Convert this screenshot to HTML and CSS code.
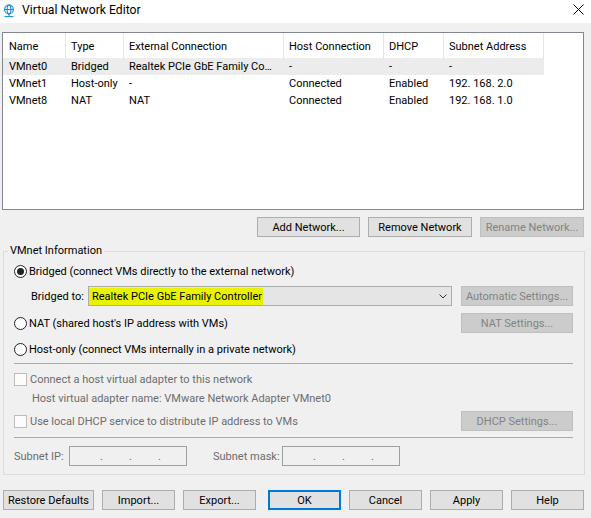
FILE: index.html
```html
<!DOCTYPE html>
<html>
<head>
<meta charset="utf-8">
<title>Virtual Network Editor</title>
<link rel="stylesheet" href="styles.css">
</head>
<body>
<div class="titlebar">
  <svg class="app-icon" width="12" height="14" viewBox="0 0 12 14">
    <g fill="none" stroke="#1b8ed6" stroke-width="1.1">
      <circle cx="6" cy="5.5" r="4.4"/>
      <ellipse cx="6" cy="5.5" rx="1.9" ry="4.4"/>
      <line x1="1.6" y1="5.5" x2="10.4" y2="5.5"/>
      <line x1="6" y1="10" x2="6" y2="12.6"/>
      <line x1="1.5" y1="12.6" x2="10.5" y2="12.6"/>
    </g>
  </svg>
  <span class="title">Virtual Network Editor</span>
  <svg class="close" width="11" height="11" viewBox="0 0 11 11">
    <path d="M0.5 0.5 L10.5 10.5 M10.5 0.5 L0.5 10.5" stroke="#000" stroke-width="1" fill="none"/>
  </svg>
</div>

<div class="content">
  <div class="list">
    <div class="lv-row lv-head">
      <div class="cell first">Name</div>
      <div class="cell">Type</div>
      <div class="cell">External Connection</div>
      <div class="cell">Host Connection</div>
      <div class="cell">DHCP</div>
      <div class="cell">Subnet Address</div>
    </div>
    <div class="lv-row sel">
      <div class="cell first">VMnet0</div>
      <div class="cell">Bridged</div>
      <div class="cell">Realtek PCIe GbE Family Co…</div>
      <div class="cell">-</div>
      <div class="cell">-</div>
      <div class="cell">-</div>
    </div>
    <div class="lv-row">
      <div class="cell first">VMnet1</div>
      <div class="cell">Host-only</div>
      <div class="cell">-</div>
      <div class="cell">Connected</div>
      <div class="cell">Enabled</div>
      <div class="cell">192. 168. 2.0</div>
    </div>
    <div class="lv-row">
      <div class="cell first">VMnet8</div>
      <div class="cell">NAT</div>
      <div class="cell">NAT</div>
      <div class="cell">Connected</div>
      <div class="cell">Enabled</div>
      <div class="cell">192. 168. 1.0</div>
    </div>
  </div>

  <div class="net-actions">
    <button class="btn w-add">Add Network...</button>
    <button class="btn w-remove">Remove Network</button>
    <button class="btn w-rename disabled">Rename Network...</button>
  </div>

  <fieldset class="group">
    <legend>VMnet Information</legend>

    <div class="opt-row r-bridged">
      <span class="radio on"></span>
      <span class="txt">Bridged (connect VMs directly to the external network)</span>
    </div>

    <div class="opt-row r-bridged-to">
      <span class="bt-label">Bridged to:</span>
      <div class="combo">
        <span class="hl">Realtek PCIe GbE Family Controller</span>
        <svg class="chev" width="8" height="5" viewBox="0 0 8 5">
          <polyline points="0.5,0.5 4,4 7.5,0.5" fill="none" stroke="#333" stroke-width="1"/>
        </svg>
      </div>
      <button class="btn w-side disabled push">Automatic Settings...</button>
    </div>

    <div class="opt-row r-nat">
      <span class="radio"></span>
      <span class="txt">NAT (shared host's IP address with VMs)</span>
      <button class="btn w-side disabled push">NAT Settings...</button>
    </div>

    <div class="opt-row r-host">
      <span class="radio"></span>
      <span class="txt">Host-only (connect VMs internally in a private network)</span>
    </div>

    <div class="sep s1"></div>

    <div class="opt-row r-check1 dim">
      <span class="check"></span>
      <span class="txt">Connect a host virtual adapter to this network</span>
    </div>

    <div class="opt-row r-adapter dim">
      <span class="txt">Host virtual adapter name: VMware Network Adapter VMnet0</span>
    </div>

    <div class="opt-row r-dhcp dim">
      <span class="check"></span>
      <span class="txt">Use local DHCP service to distribute IP address to VMs</span>
      <button class="btn w-side disabled push">DHCP Settings...</button>
    </div>

    <div class="sep s2"></div>

    <div class="opt-row r-subnet dim">
      <span class="sn-label">Subnet IP:</span>
      <div class="ipbox"><span>.</span><span>.</span><span>.</span></div>
      <span class="sn-label mask">Subnet mask:</span>
      <div class="ipbox"><span>.</span><span>.</span><span>.</span></div>
    </div>
  </fieldset>
</div>

<div class="footer">
  <button class="btn w-restore">Restore Defaults</button>
  <button class="btn w-std">Import...</button>
  <button class="btn w-std">Export...</button>
  <button class="btn w-std default ok">OK</button>
  <button class="btn w-std">Cancel</button>
  <button class="btn w-std">Apply</button>
  <button class="btn w-std">Help</button>
</div>
</body>
</html>
```

FILE: styles.css
```css
* { box-sizing: border-box; }
html, body { margin: 0; padding: 0; }
body {
  width: 591px;
  height: 518px;
  overflow: hidden;
  background: #f0f0f0;
  font-family: Roboto, "Noto Sans", sans-serif;
  font-size: 11px;
  color: #000;
}

/* title bar */
.titlebar {
  height: 23px;
  background: #fff;
  display: flex;
  align-items: center;
  padding-left: 3px;
}
.app-icon { display: block; margin-top: -2px; }
.title { margin-left: 7px; font-size: 12.2px; line-height: 16px; margin-top: -3px; }
.close { margin-left: auto; margin-right: 7px; align-self: flex-start; margin-top: 4px; }

.content { padding: 9px 0 0 2px; }

/* list view */
.list {
  width: 582px;
  height: 178px;
  background: #fff;
  border: 1px solid #828790;
}
.lv-row {
  display: grid;
  grid-template-columns: 63px 58px 160px 100px 60px 100px;
  width: 541px;
  height: 17px;
  line-height: 16px;
  padding-top: 1px;
}
.lv-head { height: 25px; line-height: 23px; padding-top: 2px; }
.lv-head .cell { border-right: 1px solid #e5e5e5; margin-top: -2px; padding-top: 2px; }
.lv-row.sel { background: #ececec; }
.cell { padding-left: 5px; white-space: nowrap; overflow: hidden; }
.cell.first { padding-left: 6px; }

/* buttons */
.btn {
  height: 20px;
  border: 1px solid #adadad;
  background: #e1e1e1;
  font-family: inherit;
  font-size: 11px;
  color: #000;
  padding: 0;
  margin: 0;
  display: flex;
  align-items: center;
  justify-content: center;
  white-space: nowrap;
  flex: none;
}
.btn.disabled { background: #cccccc; border-color: #bfbfbf; color: #838383; }
.btn.default { border: 2px solid #0078d7; }
.w-add { width: 103px; }
.w-remove { width: 104px; }
.w-rename { width: 104px; }
.w-side { width: 112px; }
.w-restore { width: 91px; }
.w-std { width: 73px; }
.push { margin-left: auto; }

.net-actions {
  width: 582px;
  margin-top: 7px;
  display: flex;
  justify-content: flex-end;
  gap: 8px;
}

/* group box */
.group {
  margin: 6px 0 0 1px;
  width: 582px;
  min-width: 0;
  border: 1px solid #dcdcdc;
  padding: 0 11px 8px 10px;
}
.group legend {
  margin-left: -6px;
  padding: 0 2px;
  line-height: 16px;
  height: 16px;
}

.opt-row { display: flex; align-items: center; white-space: nowrap; }
.txt { padding-top: 1px; }
.r-bridged { height: 24px; }
.r-bridged-to { height: 26px; }
.r-nat { height: 28px; }
.r-host { height: 24px; }
.r-check1 { height: 18px; margin-top: 6px; }
.r-adapter { height: 18px; margin-top: 1px; padding-left: 18px; }
.r-dhcp { height: 20px; margin-top: 4px; }
.r-subnet { height: 20px; margin-top: 8px; }
.dim { color: #6d6d6d; }

.radio {
  width: 13px;
  height: 13px;
  border: 1px solid #222;
  border-radius: 50%;
  background: #fff;
  margin-right: 2px;
  flex: none;
  display: flex;
  align-items: center;
  justify-content: center;
}
.radio.on::after {
  content: "";
  width: 7px;
  height: 7px;
  border-radius: 50%;
  background: #222;
}
.check {
  width: 13px;
  height: 13px;
  border: 1px solid #bcbcbc;
  background: #fcfcfc;
  margin-right: 3px;
  flex: none;
}

.bt-label { width: 74px; padding-left: 17px; flex: none; white-space: nowrap; }
.combo {
  width: 364px;
  height: 20px;
  border: 1px solid #adadad;
  background: #e5e5e5;
  display: flex;
  align-items: center;
  flex: none;
}
.combo .hl {
  background: #e9f200;
  width: 174px;
  height: 17px;
  display: flex;
  align-items: center;
  padding: 1px 0 0 3px;
  white-space: nowrap;
}
.combo .chev { margin-left: auto; margin-right: 4px; }

.sep { height: 1px; background: #a9a9a9; }
.s1 { margin-top: 2px; }
.s2 { margin-top: 6px; }

.sn-label { width: 55px; flex: none; white-space: nowrap; }
.sn-label.mask { width: 69px; margin-left: 26px; }
.ipbox {
  width: 118px;
  height: 20px;
  border: 1px solid #a0a0a0;
  display: flex;
  align-items: center;
  padding-left: 30px;
  flex: none;
}
.ipbox span { width: 29px; flex: none; }

/* footer */
.footer {
  display: flex;
  gap: 8px;
  padding-left: 3px;
  margin-top: 15px;
}
.footer .ok { margin-left: 4px; }
```
